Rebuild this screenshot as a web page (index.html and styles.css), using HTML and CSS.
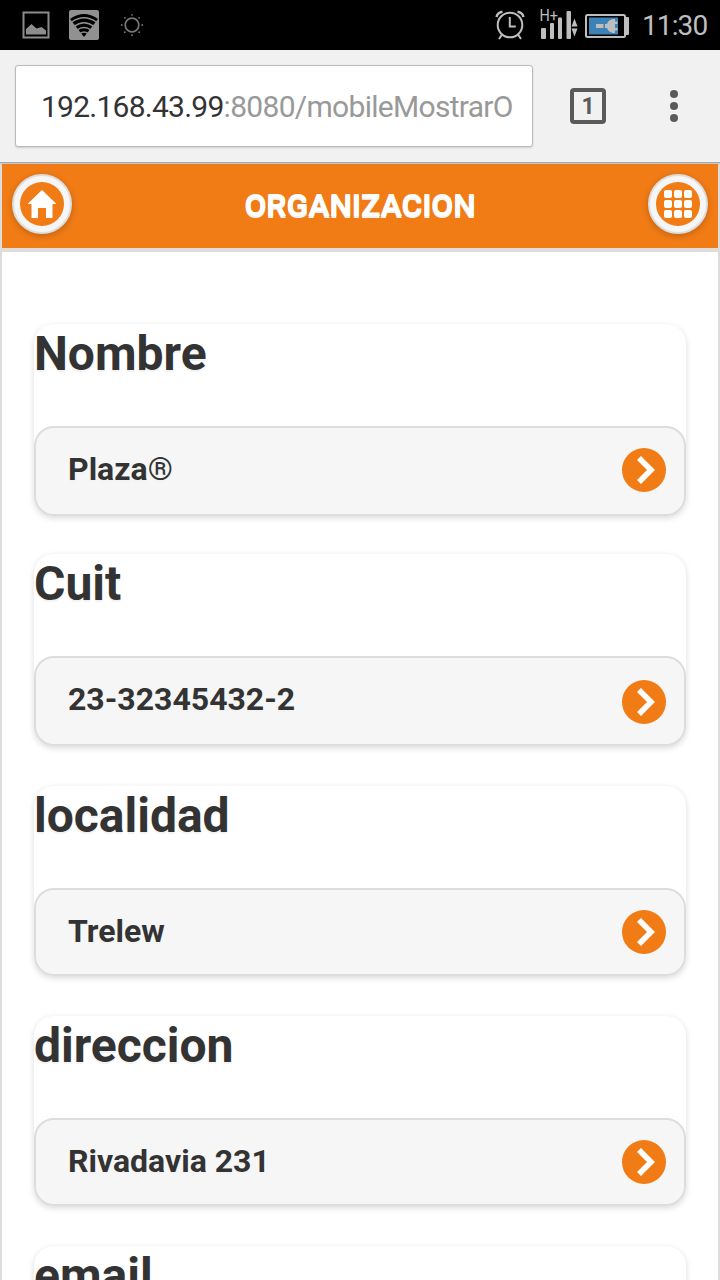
FILE: index.html
```
<!DOCTYPE html>
<html lang="es">
<head>
<meta charset="utf-8">
<title>Organizacion</title>
<link rel="stylesheet" href="styles.css">
</head>
<body>
<div class="status">
  <svg class="status-left" width="160" height="50" viewBox="0 0 160 50">
    <rect x="23.5" y="12.500" width="25" height="25" fill="none" stroke="#8c8c8c" stroke-width="2"/>
    <path d="M26 34.500V29l5.500-5 5 4.500 5-1.500 4.500 3.500v4z" fill="#8c8c8c"/>
    <rect x="69" y="10" width="30" height="30" rx="2" fill="#919191"/>
    <path d="M70 19Q84 9 98 19L84 37z" fill="#000"/>
    <g fill="none" stroke="#919191" stroke-width="1.500"><path d="M71 22.500Q84 13 97 22.500M74 26.500Q84 19 94 26.500M77 30Q84 25 91 30M80 33.500Q84 30.500 88 33.500"/></g>
    <circle cx="132" cy="25" r="6.800" fill="none" stroke="#777" stroke-width="1.700"/>
    <g fill="#777"><circle cx="132" cy="14.800" r=".9"/><circle cx="132" cy="35.200" r=".9"/><circle cx="121.800" cy="25" r=".9"/><circle cx="142.200" cy="25" r=".9"/><circle cx="124.800" cy="17.800" r=".9"/><circle cx="139.200" cy="17.800" r=".9"/><circle cx="124.800" cy="32.200" r=".9"/><circle cx="139.200" cy="32.200" r=".9"/></g>
  </svg>
  <svg class="status-right" width="150" height="50" viewBox="490 0 150 50">
    <g fill="none" stroke="#bebebe" stroke-width="2"><circle cx="510" cy="25" r="12.300"/><path d="M509.800 17v9.500h6M502 34.500l-3 4.500M518 34.500l3 4.500"/><path d="M496.500 17q1-4.500 6-5.200M523.500 17q-1-4.500-6-5.200" stroke-width="2.400"/></g>
    <text class="network" x="539.500" y="20.700" textLength="18.500" lengthAdjust="spacingAndGlyphs">H+</text>
    <g fill="#bebebe"><rect x="541" y="28" width="5" height="11" rx="1"/><rect x="550" y="23" width="4" height="16" rx="1"/><rect x="558" y="17.500" width="4" height="21.500" rx="1"/><rect x="566.500" y="11" width="4.500" height="28" rx="1"/><path d="M571.500 26.500h6l-3-8zM571.500 28.500h6l-3 8z"/></g>
    <rect x="586" y="15" width="39" height="22" rx="1.500" fill="none" stroke="#bebebe" stroke-width="2"/>
    <rect x="625" y="17" width="4" height="18" rx="1" fill="#bebebe"/>
    <rect x="589" y="17.500" width="29" height="17" fill="#3c82b6"/>
    <path d="M596 24h7.500v4H596zM605 24h2q1-4 6-5h2v2.500h2.500V24H615v4h2.500v2.500H615V33h-2q-5-1-6-5h-2z" fill="#bebebe"/>
  </svg>
  <span class="clock">11:30</span>
</div>
<div class="toolbar">
  <div class="address"><span class="host">192.168.43.99</span><span class="path">:8080/mobileMostrarO</span></div>
  <div class="tabs">1</div>
  <div class="menu"><i class="dot"></i><i class="dot"></i><i class="dot"></i></div>
</div>
<main class="page">
  <header class="header">
    <a class="round"><svg width="44" height="44" viewBox="0 0 44 44"><circle cx="22" cy="22" r="22" fill="#f17b15"/><path d="M22 8l14 13.500V22h-3.500v14H26V26h-8v10h-6.500V22H8v-.5z" fill="#fff"/></svg></a>
    <h1 class="title">ORGANIZACION</h1>
    <a class="round"><svg width="44" height="44" viewBox="0 0 44 44"><circle cx="22" cy="22" r="22" fill="#f17b15"/><g fill="#fff"><rect x="8" y="8" width="8" height="8" rx="2"/><rect x="18" y="8" width="8" height="8" rx="2"/><rect x="28" y="8" width="8" height="8" rx="2"/><rect x="8" y="18" width="8" height="8" rx="2"/><rect x="18" y="18" width="8" height="8" rx="2"/><rect x="28" y="18" width="8" height="8" rx="2"/><rect x="8" y="28" width="8" height="8" rx="2"/><rect x="18" y="28" width="8" height="8" rx="2"/><rect x="28" y="28" width="8" height="8" rx="2"/></g></svg></a>
  </header>
  <div class="content">
    <section class="card"><h2 class="label">Nombre</h2><a class="item"><span class="value">Plaza<span class="reg">®</span></span><svg class="arrow" width="44" height="44" viewBox="0 0 44 44"><circle cx="22" cy="22" r="22" fill="#f17b15"/><path d="M17 10l12 12-12 12" fill="none" stroke="#fff" stroke-width="5.600"/></svg></a></section>
    <section class="card"><h2 class="label">Cuit</h2><a class="item"><span class="value">23-32345432-2</span><svg class="arrow low" width="44" height="44" viewBox="0 0 44 44"><circle cx="22" cy="22" r="22" fill="#f17b15"/><path d="M17 10l12 12-12 12" fill="none" stroke="#fff" stroke-width="5.600"/></svg></a></section>
    <section class="card short"><h2 class="label">localidad</h2><a class="item"><span>Trelew</span><svg class="arrow" width="44" height="44" viewBox="0 0 44 44"><circle cx="22" cy="22" r="22" fill="#f17b15"/><path d="M17 10l12 12-12 12" fill="none" stroke="#fff" stroke-width="5.600"/></svg></a></section>
    <section class="card short"><h2 class="label">direccion</h2><a class="item"><span>Rivadavia 231</span><svg class="arrow" width="44" height="44" viewBox="0 0 44 44"><circle cx="22" cy="22" r="22" fill="#f17b15"/><path d="M17 10l12 12-12 12" fill="none" stroke="#fff" stroke-width="5.600"/></svg></a></section>
    <section class="card"><h2 class="label">email</h2></section>
  </div>
</main>
</body>
</html>
```
FILE: styles.css
```
* { box-sizing: border-box; }
body {
  margin: 0;
  width: 720px;
  height: 1280px;
  overflow: hidden;
  display: flex;
  flex-direction: column;
  background: #fff;
  color: #333;
  font-family: Roboto, sans-serif;
}
svg { display: block; }
.status {
  flex: none;
  height: 50px;
  background: #000;
  display: flex;
  align-items: center;
}
.status-right { margin-left: 330px; }
.network { font: 16.5px Roboto, sans-serif; fill: #bebebe; }
.clock {
  margin-left: 2px;
  padding-top: 2px;
  color: #bebebe;
  font-size: 28px;
  line-height: 48px;
  letter-spacing: -.9px;
  white-space: nowrap;
}
.toolbar {
  flex: none;
  height: 114px;
  padding: 15px 0 0 15px;
  background: #f1f1f1;
  border-bottom: 1px solid #c5c8ca;
  box-shadow: inset 0 -1px #aaa;
  display: flex;
}
.address {
  width: 518px;
  height: 82px;
  padding-left: 25px;
  background: #fff;
  border: 1px solid #bbb;
  border-radius: 3px;
  box-shadow: 0 1px 2px rgba(0, 0, 0, .15);
  font-size: 30px;
  line-height: 82px;
  white-space: nowrap;
  overflow: hidden;
}
.host { letter-spacing: -.75px; }
.path { color: #999; letter-spacing: -.7px; }
.tabs {
  margin: 23px 0 0 37px;
  width: 36px;
  height: 36px;
  border: 4px solid #5a5a5a;
  border-radius: 4px;
  color: #5a5a5a;
  font-size: 23px;
  font-weight: 700;
  line-height: 29px;
  text-align: center;
}
.menu {
  margin: 25px 0 0 64px;
  display: flex;
  flex-direction: column;
  gap: 4px;
}
.dot { width: 8px; height: 8px; border-radius: 50%; background: #5a5a5a; }
.page {
  flex: 1;
  min-height: 0;
  border: solid #ddd;
  border-width: 0 2px;
  overflow: hidden;
}
.header {
  height: 88px;
  padding: 10px;
  background: #f17b15;
  border-bottom: 4px solid #ddd;
  display: flex;
  justify-content: space-between;
}
.round {
  width: 60px;
  height: 60px;
  padding: 6px;
  background: #f6f6f6;
  border: 2px solid #ddd;
  border-radius: 50%;
  box-shadow: 0 2px 6px rgba(0, 0, 0, .2);
}
.title {
  margin: 0;
  color: #fff;
  font-size: 32px;
  font-weight: 700;
  line-height: 62px;
  letter-spacing: -.2px;
  text-shadow: 0 2px #f3f3f3;
}
.content {
  padding: 72px 32px 0;
  display: flex;
  flex-direction: column;
  gap: 38px;
}
.card {
  height: 192px;
  border-radius: 20px;
  box-shadow: 0 2px 6px rgba(0, 0, 0, .15);
}
.card:nth-child(2) { margin-bottom: 2px; }
.card.short { height: 190px; }
.card.short + .card { margin-top: 2px; }
.label {
  margin: 0;
  height: 102px;
  font-size: 48px;
  font-weight: 700;
  line-height: 60px;
  text-shadow: 0 2px #f3f3f3;
}
.item {
  height: calc(100% - 102px);
  padding: 0 18px 2px 32px;
  background: #f6f6f6;
  border: 2px solid #ddd;
  border-radius: 20px;
  display: flex;
  align-items: center;
  justify-content: space-between;
  font-size: 32px;
  font-weight: 700;
  text-shadow: 0 2px #f3f3f3;
}
.value { margin-bottom: 2px; }
.low { margin-top: 4px; }
.short .arrow { margin-top: 2px; }
.reg { font-weight: 400; }
```
